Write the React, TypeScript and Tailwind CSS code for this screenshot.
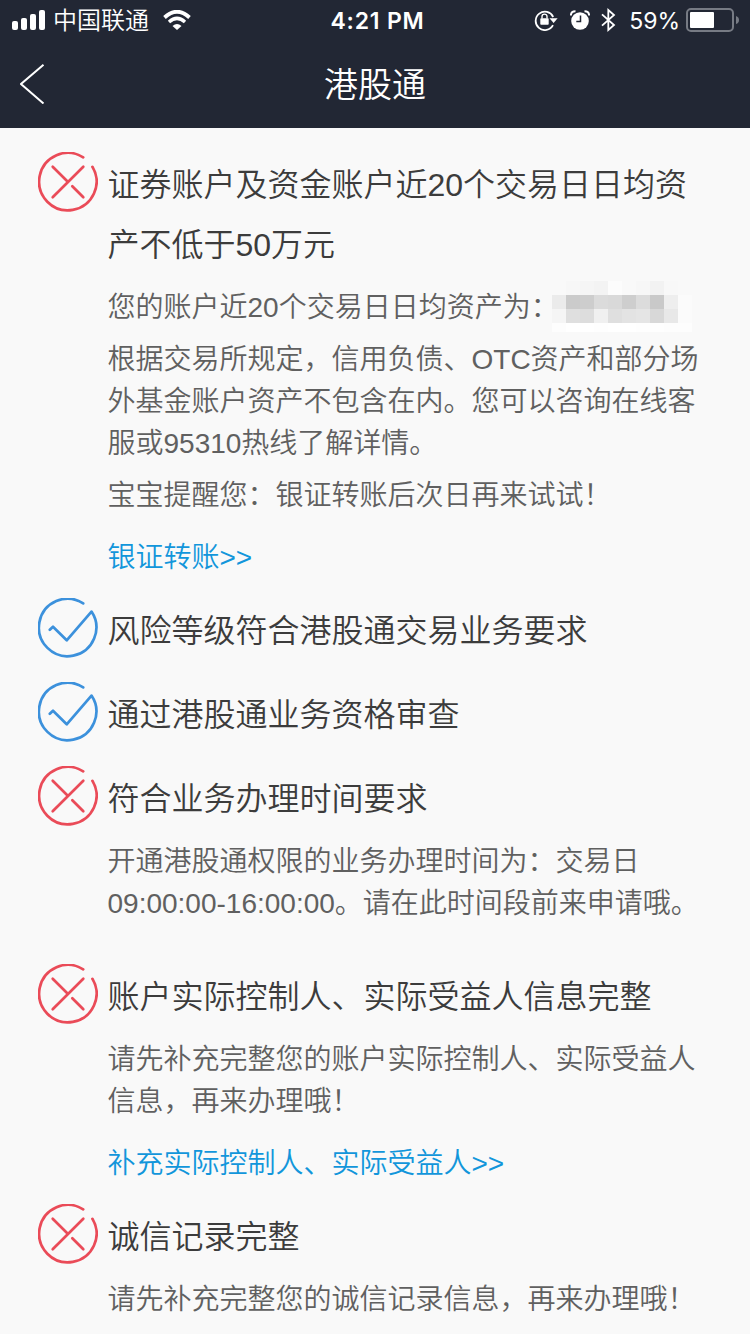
import type { ReactNode } from "react";

type Status = "pass" | "fail";

type RequirementProps = {
  status: Status;
  title: ReactNode;
  className?: string;
  children?: ReactNode;
};

const mosaicRows = [
  {
    height: "h-[14px]",
    cells: ["#f9f9f9", "#f7f7f7", "#f5f5f5", "#f3f3f3", "#fcfcfc", "#f9f9f9", "#f7f7f7", "#f2f2f2", "#f8f8f8", "#f9f9f9"],
  },
  {
    height: "h-[14px]",
    cells: ["#ebebeb", "#cbcbcb", "#cdcdcd", "#dbdbdb", "#d9d9d9", "#cecece", "#dcdcdc", "#c9c9c9", "#eeeeee", "#fbfbfb"],
  },
  {
    height: "h-[14px]",
    cells: ["#f5f5f5", "#dfdfdf", "#dddddd", "#f0f0f0", "#dfdfdf", "#e3e3e3", "#e5e5e5", "#d8d8d8", "#e8e8e8", "#fbfbfb"],
  },
  {
    height: "h-[9px]",
    cells: ["#fdfdfd", "#ffffff", "#ffffff", "#fefefe", "#ffffff", "#ffffff", "#fefefe", "#fefefe", "#fdfdfd", "#fdfdfd"],
  },
];

function Mosaic() {
  return (
    <span className="-ml-[6.5px] -mt-1.5 block">
      {mosaicRows.map((row, index) => (
        <span key={index} className={`flex ${row.height}`}>
          {row.cells.map((color, cell) => (
            <span key={cell} className="w-[14px]" style={{ backgroundColor: color }} />
          ))}
        </span>
      ))}
    </span>
  );
}

function StatusIcon({ status }: { status: Status }) {
  if (status === "pass") {
    return (
      <svg className="-mt-[3px] size-[60px] shrink-0" viewBox="0 0 60 60" fill="none" stroke="#3c91dc" strokeWidth="2.7" strokeLinecap="round" strokeLinejoin="round">
        <path d="M45.2 5.4A28.7 28.7 0 1 0 53.5 13.6L28.7 42.3L15 28.7L11.8 31.8" />
      </svg>
    );
  }

  return (
    <svg className="-mt-[3px] size-[60px] shrink-0" viewBox="0 0 60 60" fill="none" stroke="#ea4b58" strokeWidth="2.7" strokeLinecap="round">
      <path d="M45.2 5.4A28.7 28.7 0 1 0 54.4 14.8" />
      <path d="M45.3 14.7L14.7 45.3M14.7 14.7L29.8 29.8M34.3 34.3L45.3 45.3" />
    </svg>
  );
}

function Requirement({ status, title, className = "", children }: RequirementProps) {
  return (
    <section className={`flex gap-2.5 ${className}`}>
      <StatusIcon status={status} />
      <div className="-ml-[0.5px] whitespace-nowrap text-[28px] font-[350] leading-[42px] text-[#606060]">
        <h2 className="text-[32px] leading-[60px] text-[#3c3c3c]">{title}</h2>
        {children}
      </div>
    </section>
  );
}

function StatusBar() {
  return (
    <div className="flex h-10 items-center justify-between pl-3 pr-[11px]">
      <div className="flex w-[310px] items-center">
        <svg className="h-5 w-[33px]" viewBox="0 0 33 20" fill="#fff">
          <rect x="0" y="11" width="6" height="9" rx="2" />
          <rect x="9" y="8" width="6" height="12" rx="2" />
          <rect x="18" y="4" width="6" height="16" rx="2" />
          <rect x="27" y="0" width="6" height="20" rx="2" />
        </svg>
        <span className="ml-2 pt-0.5 text-2xl font-[350]">中国联通</span>
        <svg className="ml-3.5 h-5 w-7" viewBox="0 0 28 20">
          <path d="M1.5 7.5Q14 -4 26.5 7.5" fill="none" stroke="#fff" strokeWidth="3.8" />
          <path d="M6 12Q14 4.8 22 12" fill="none" stroke="#fff" strokeWidth="3.4" />
          <path d="M9.5 16Q14 12 18.5 16L14 20Z" fill="#fff" />
        </svg>
      </div>
      <span className="pt-0.5 font-[Inter,sans-serif] text-[23px] font-semibold tracking-[0.8px]">4:21 PM</span>
      <div className="flex w-[306px] items-center justify-end">
        <svg className="h-[22px] w-6" viewBox="0 0 24 22">
          <path d="M19 16.2A9.2 9.2 0 1 1 19.2 8" fill="none" stroke="#fff" strokeWidth="1.8" />
          <path d="M15.5 9.2H23.6L19.6 14Z" fill="#fff" />
          <rect x="6.3" y="9.3" width="8.4" height="6.4" rx=".8" fill="#fff" />
          <path d="M8 9.5V7.6a2.5 2.5 0 0 1 5 0V9.5" fill="none" stroke="#fff" strokeWidth="1.4" />
        </svg>
        <svg className="ml-3 h-5 w-5" viewBox="0 0 20 20">
          <circle cx="10" cy="11" r="8.8" fill="#fff" />
          <path d="M.9 5.4Q1 1.2 5.5 1.3M19.1 5.4Q19 1.2 14.5 1.3" fill="none" stroke="#fff" strokeWidth="2" />
          <path d="M10.5 5.5V11.5H6.3" fill="none" stroke="#222734" strokeWidth="1.5" />
        </svg>
        <svg className="ml-[11px] h-6 w-[15px]" viewBox="0 0 15 24" fill="none" stroke="#fff" strokeWidth="1.8">
          <path d="M1 6.3L13 17L7.3 22V2L13 7L1 17.7" />
        </svg>
        <span className="ml-[13px] pt-0.5 font-[Inter,sans-serif] text-[23px]">59%</span>
        <svg className="ml-1.5 h-6 w-[53px]" viewBox="0 0 53 24">
          <rect x="1" y="1" width="46" height="22" rx="4" fill="none" stroke="#777b84" strokeWidth="2" />
          <rect x="4" y="4" width="24" height="16" rx="1" fill="#fff" />
          <path d="M50 8Q53 9 53 12T50 16Z" fill="#777b84" />
        </svg>
      </div>
    </div>
  );
}

export default function App() {
  return (
    <div className="h-[1334px] w-[750px] overflow-hidden bg-[#f9f9f9] font-['Liberation_Sans','Noto_Sans_CJK_SC',sans-serif]">
      <header className="h-32 bg-[#222734] text-white">
        <StatusBar />
        <div className="flex h-[88px] items-center justify-between px-5">
          <svg className="h-10 w-[26px]" viewBox="0 0 26 40" fill="none" stroke="#fff" strokeWidth="2">
            <path d="M23.5 .8L1 20L23.5 39.5" />
          </svg>
          <h1 className="pt-0.5 text-[34px] font-[350]">港股通</h1>
          <span className="w-[26px]" />
        </div>
      </header>

      <main className="flex flex-col pl-[38px] pt-[27px]">
        <Requirement
          status="fail"
          title={
            <>
              证券账户及资金账户近20个交易日日均资
              <br />
              产不低于50万元
            </>
          }
        >
          <div className="mt-3 flex h-[42px]">
            您的账户近20个交易日日均资产为：
            <Mosaic />
          </div>
          <p className="mt-2.5">
            根据交易所规定，信用负债、OTC资产和部分场
            <br />
            外基金账户资产不包含在内。您可以咨询在线客
            <br />
            服或95310热线了解详情。
          </p>
          <p className="mt-2.5">宝宝提醒您：银证转账后次日再来试试！</p>
          <a className="mt-5 block text-[#1296db]">银证转账&gt;&gt;</a>
        </Requirement>

        <Requirement status="pass" title="风险等级符合港股通交易业务要求" className="mt-[22px]" />
        <Requirement status="pass" title="通过港股通业务资格审查" className="mt-6" />

        <Requirement status="fail" title="符合业务办理时间要求" className="mt-6">
          <p className="mt-3">
            开通港股通权限的业务办理时间为：交易日
            <br />
            09:00:00-16:00:00。请在此时间段前来申请哦。
          </p>
        </Requirement>

        <Requirement status="fail" title="账户实际控制人、实际受益人信息完整" className="mt-[42px]">
          <p className="mt-3">
            请先补充完整您的账户实际控制人、实际受益人
            <br />
            信息，再来办理哦！
          </p>
          <a className="mt-5 block text-[#1296db]">补充实际控制人、实际受益人&gt;&gt;</a>
        </Requirement>

        <Requirement status="fail" title="诚信记录完整" className="mt-[22px]">
          <p className="mt-3">请先补充完整您的诚信记录信息，再来办理哦！</p>
        </Requirement>
      </main>
    </div>
  );
}
